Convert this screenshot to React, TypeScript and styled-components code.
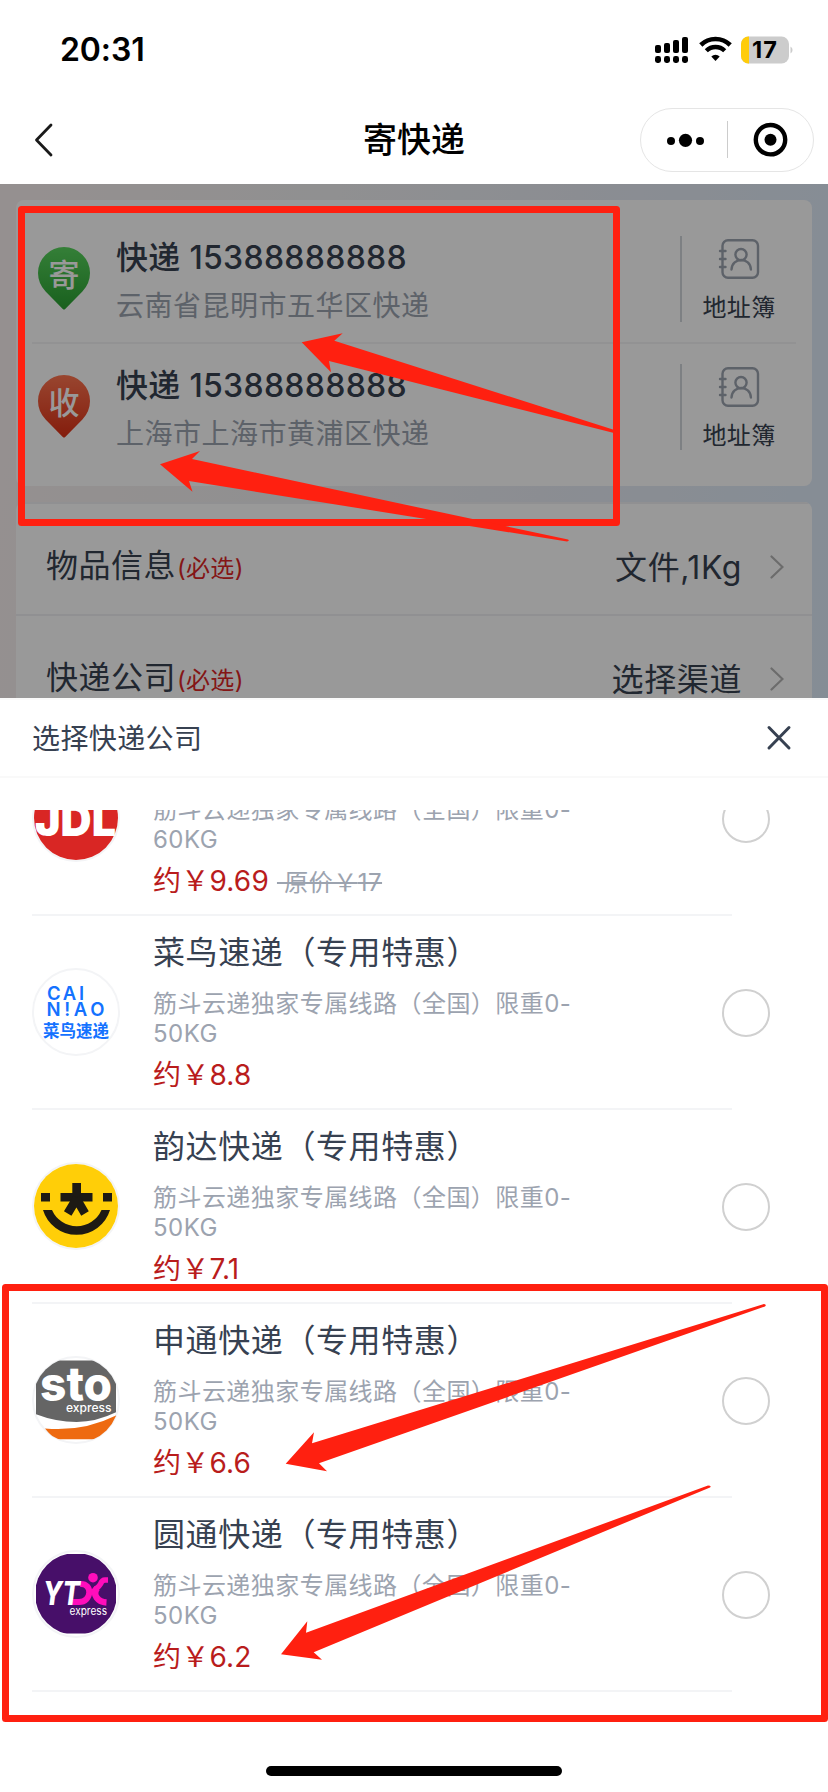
import React from "react";
import styled, { createGlobalStyle } from "styled-components";

const GlobalStyle = createGlobalStyle`
  * { box-sizing: border-box; }
  body {
    margin: 0;
    background: #fff;
    font-family: Inter, "Noto Sans CJK SC", sans-serif;
    color: #374151;
  }
  svg { display: block; flex: none; }
`;

const Screen = styled.div`
  position: relative;
  width: 828px;
  height: 1792px;
  overflow: hidden;
  display: flex;
  flex-direction: column;
  background: #fff;
`;

const StatusBar = styled.header`
  height: 100px;
  padding: 0 34px 0 60px;
  display: flex;
  align-items: center;
  justify-content: space-between;
  color: #000;
`;

const Clock = styled.time`
  font-size: 32px;
  font-weight: 600;
  line-height: 40px;
  letter-spacing: -0.1px;
`;

const StatusIcons = styled.div`
  display: flex;
  align-items: center;
`;

const NavBar = styled.nav`
  height: 84px;
  padding: 0 14px 4px 34px;
  display: grid;
  grid-template-columns: 1fr auto 1fr;
  align-items: center;
  color: #000;
`;

const NavTitle = styled.h1`
  margin: 0 10px 0 -10px;
  font-size: 34px;
  font-weight: 500;
  line-height: 48px;
`;

const Capsule = styled.div`
  justify-self: end;
  width: 174px;
  height: 64px;
  border: 1px solid #e5e5e5;
  border-radius: 32px;
  display: flex;
  align-items: center;
`;

const FormArea = styled.main`
  position: relative;
  height: 514px;
  flex: none;
  overflow: hidden;
  padding: 16px;
  display: flex;
  flex-direction: column;
  gap: 16px;
  background: linear-gradient(97deg, #f9f0f0 0%, #f0f0f2 38%, #e8ecf4 65%, #deebf9 100%);
`;

const Mask = styled.div`
  position: absolute;
  inset: 0;
  background: rgba(0, 0, 0, 0.4);
`;

const AddressCard = styled.section`
  flex: none;
  height: 286px;
  padding: 16px 16px 14px;
  border-radius: 8px;
  background: #fff;
`;

const AddressRow = styled.div<{ $last?: boolean }>`
  height: 128px;
  display: flex;
  align-items: center;
  border-bottom: 2px solid ${(p) => (p.$last ? "transparent" : "#f3f4f6")};
`;

const AddressText = styled.div`
  flex: 1;
  margin-left: 26px;
  padding-top: 5px;
`;

const Contact = styled.div`
  font-size: 32px;
  font-weight: 500;
  line-height: 48px;
  letter-spacing: 0.3px;
`;

const Place = styled.div`
  font-size: 28px;
  line-height: 48px;
  letter-spacing: 0.5px;
  color: #9ca3af;
`;

const BookButton = styled.div`
  width: 116px;
  height: 86px;
  border-left: 2px solid #d1d5db;
  display: flex;
  flex-direction: column;
  align-items: center;
  font-size: 24px;
  line-height: 36px;
  letter-spacing: 0.3px;

  svg { margin: 3px 0 11px; }
`;

const OptionCard = styled.section`
  flex: none;
  border-radius: 8px 8px 0 0;
  background: #fff;
  overflow: hidden;
`;

const OptionRow = styled.div`
  height: 112px;
  padding: 16px 28px 0 30px;
  border-top: 2px solid #f0f1f3;
  display: flex;
  align-items: center;
  font-size: 32px;
  line-height: 48px;
`;

const OptionName = styled.span`
  flex: 1;
  padding-top: 1px;
  letter-spacing: 0.5px;
`;

const Required = styled.small`
  margin-left: 1px;
  font-size: 24px;
  letter-spacing: 0.3px;
  color: #dc2626;
`;

const OptionValue = styled.span`
  padding-top: 1px;
  letter-spacing: 0.6px;
  margin-right: 28px;
`;

const Sheet = styled.section`
  flex: 1;
  display: flex;
  flex-direction: column;
`;

const SheetHeader = styled.div`
  height: 80px;
  padding: 0 36px 0 32px;
  display: flex;
  align-items: center;
  justify-content: space-between;
  border-top: 2px solid #fafafa;
  border-bottom: 2px solid #f9f9f9;
`;

const SheetTitle = styled.h2`
  margin: 0;
  padding-bottom: 2px;
  font-size: 28px;
  font-weight: 400;
  letter-spacing: 0.4px;
`;

const CarrierList = styled.div`
  margin: 32px 32px 0;
  height: 900px;
  overflow: hidden;
`;

const Scrolled = styled.div`
  margin-top: -88px;
`;

const Carrier = styled.article`
  width: 738px;
  height: 192px;
  display: flex;
  align-items: center;
`;

const Divider = styled.div`
  width: 700px;
  height: 2px;
  background: #f3f4f6;
`;

const Logo = styled.div`
  width: 88px;
  height: 88px;
  border: 2px solid #f3f4f6;
  border-radius: 50%;

  svg { margin: -2px; }
`;

const Details = styled.div`
  align-self: flex-start;
  width: 440px;
  margin-left: 33px;
  padding-top: 16px;
`;

const CarrierName = styled.div`
  font-size: 32px;
  line-height: 42px;
  letter-spacing: 0.6px;
  white-space: nowrap;
`;

const Desc = styled.div`
  margin-top: 15px;
  font-size: 24px;
  line-height: 30px;
  letter-spacing: 0.45px;
  color: #9ca3af;
`;

const Price = styled.div`
  margin-top: 8px;
  font-size: 28px;
  line-height: 36px;
  letter-spacing: 0.2px;
  color: #b91c1c;
  white-space: pre;
`;

const OldPrice = styled.s`
  margin-left: 8px;
  font-size: 24px;
  letter-spacing: 0.5px;
  color: #9ca3af;
`;

const Radio = styled.div`
  width: 48px;
  height: 48px;
  margin: 2px 0 0 auto;
  border: 2px solid #d0d0d0;
  border-radius: 50%;
`;

const HomeIndicator = styled.div`
  width: 296px;
  height: 10px;
  margin: auto auto 16px;
  border-radius: 5px;
  background: #000;
`;

const Annotations = styled.svg`
  position: absolute;
  inset: 0;
`;

const PhoneStatus = () => (
  <svg width="140" height="28" viewBox="0 0 140 28">
    {[
      [0, 9, 8],
      [9, 7, 10],
      [18, 4, 13],
      [27, 1, 16],
    ].map(([x, y, h]) => (
      <g key={x}>
        <rect x={x + 1} y={y} width="6" height={h} rx="2" />
        <rect x={x + 1} y="20" width="6" height="7" rx="2.4" />
      </g>
    ))}
    <g fill="none" stroke="#000">
      <path d="M46.8 9A21 21 0 0 1 76.200 9" strokeWidth="4.600" />
      <path d="M52.3 14.800A13 13 0 0 1 70.700 14.800" strokeWidth="4.400" />
    </g>
    <path d="M61.500 25L57.300 20.500A6 6 0 0 1 65.700 20.500Z" />
    <rect x="87" y="0.500" width="48" height="27" rx="7.500" fill="#ccc" />
    <path d="M95 0.500H94.500A7.500 7.500 0 0 0 87 8V20A7.500 7.500 0 0 0 94.500 27.500H95Z" fill="#ffcc0a" />
    <path d="M136.500 10.500A4 4 0 0 1 136.500 17.500Z" fill="#ccc" />
    <text x="98" y="22" fontSize="23.500" fontWeight="700" textLength="25">17</text>
  </svg>
);

const BackIcon = () => (
  <svg width="20" height="36" viewBox="0 0 20 36" fill="none" stroke="#1a1a1a" strokeWidth="2.800" strokeLinecap="round" strokeLinejoin="round">
    <path d="M17 3L2.500 18L17 33" />
  </svg>
);

const CapsuleIcons = () => (
  <svg width="172" height="62" viewBox="641 109 172 62">
    <circle cx="671" cy="141" r="4" />
    <circle cx="685.5" cy="140.300" r="6.600" />
    <circle cx="700" cy="141" r="4" />
    <path d="M727.500 121V158" stroke="#ccc" />
    <circle cx="770.500" cy="139.700" r="14.700" fill="none" stroke="#000" strokeWidth="4.400" />
    <circle cx="770.500" cy="139.700" r="6" />
  </svg>
);

const Pin = ({ label, colors }: { label: string; colors: [string, string] }) => (
  <svg width="52" height="64" viewBox="0 0 52 64" style={{ marginLeft: 6 }}>
    <defs>
      <linearGradient id={colors[0].slice(1)} x1="0" y1="0" x2="0" y2="1">
        <stop stopColor={colors[0]} />
        <stop offset="1" stopColor={colors[1]} />
      </linearGradient>
    </defs>
    <path
      d="M44.400 44.400L27.200 62Q26 63.200 24.800 62L7.600 44.400A26 26 0 1 1 44.400 44.400Z"
      fill={`url(#${colors[0].slice(1)})`}
    />
    <text x="26" y="39" fontSize="31" textAnchor="middle" fill="#fff" fontWeight="500">{label}</text>
  </svg>
);

const BookIcon = () => (
  <svg width="42" height="40" viewBox="0 0 42 40" fill="none" stroke="#9ca3af" strokeWidth="2.400" strokeLinecap="round">
    <rect x="4.500" y="1.200" width="35.500" height="37.500" rx="5.500" />
    <path d="M2 12H7.500M2 20H7.500M2 28H7.500" />
    <circle cx="23" cy="15.600" r="5.600" />
    <path d="M13.500 30.500C14 17.800 32.500 17.800 32.900 30.500" />
  </svg>
);

const Chevron = () => (
  <svg width="14" height="24" viewBox="0 0 14 24" fill="none" stroke="#b4b4b4" strokeWidth="2.200" strokeLinecap="round">
    <path d="M1.500 1.500L12.500 12L1.500 22.500" />
  </svg>
);

const CloseIcon = () => (
  <svg width="26" height="26" viewBox="0 0 26 26" fill="none" stroke="#374151" strokeWidth="3" strokeLinecap="round">
    <path d="M3 2.500L23 23M23 2.500L3 23" />
  </svg>
);

const JdLogo = () => (
  <svg width="88" height="88" viewBox="0 0 88 88">
    <circle cx="44" cy="44" r="42" fill="#d92624" />
    <text x="3" y="61.500" fontSize="46" fontWeight="900" fill="#fff" textLength="81" lengthAdjust="spacingAndGlyphs">JDL</text>
  </svg>
);

const CainiaoLogo = () => (
  <svg width="88" height="88" viewBox="0 0 88 88" fill="#1472ff">
    <text x="15" y="31.500" fontSize="18.500" fontWeight="600" textLength="37">CAI</text>
    <text x="14.500" y="48" fontSize="18.500" fontWeight="600" textLength="58">N!AO</text>
    <text x="11" y="68.500" fontSize="16.500" fontWeight="700">菜鸟速递</text>
  </svg>
);

const YundaLogo = () => (
  <svg width="88" height="88" viewBox="0 0 88 88">
    <circle cx="44" cy="44" r="42" fill="#ffce08" />
    <g fill="#1d1a14">
      <rect x="9" y="31" width="9" height="8.500" />
      <rect x="71" y="31" width="9" height="8.500" />
      <rect x="40.300" y="21" width="8.700" height="14" />
      <rect x="28.500" y="31" width="32" height="8.500" />
      <path d="M11 48A35 35 0 0 0 78 48H69.500A27 27 0 0 1 20 48Z" />
    </g>
    <path d="M45 36L35.700 51.500M44 36L53 51.500" stroke="#1d1a14" strokeWidth="8.700" />
  </svg>
);

const StoLogo = () => (
  <svg width="88" height="88" viewBox="0 0 88 88">
    <clipPath id="stoClip"><circle cx="44" cy="44" r="43" /></clipPath>
    <g clipPath="url(#stoClip)">
      <path d="M4 4.500H84V56.300Q64 66 44.700 66Q24 66 4 58.300Z" fill="#656565" />
      <path d="M13 72.500Q51 76 84 59.500V83.300H22Z" fill="#ee6a10" />
    </g>
    <g fill="#fff">
      <text x="8" y="45" fontSize="48" fontWeight="800" textLength="72" lengthAdjust="spacingAndGlyphs">sto</text>
      <text x="34" y="55.700" fontSize="12" fontWeight="500" textLength="45.500" lengthAdjust="spacingAndGlyphs">express</text>
    </g>
  </svg>
);

const YtoLogo = () => (
  <svg width="88" height="88" viewBox="0 0 88 88">
    <clipPath id="ytoClip"><circle cx="44" cy="44" r="41" /></clipPath>
    <rect x="4" y="4" width="80" height="79.500" fill="#470f69" clipPath="url(#ytoClip)" />
    <g fill="none" stroke="#ff0dbb" strokeWidth="6">
      <path d="M48 34C61 33 60 52 47 52H40" />
      <path d="M76 30H73Q70 30 68.500 34C66 38.500 62 39 61 43" strokeWidth="5.500" />
      <path d="M65 38C60 45 66 52 74.500 52.500" strokeWidth="6.500" />
    </g>
    <circle cx="61" cy="27.700" r="4.800" fill="#ff0dbb" />
    <g fill="#fff">
      <text x="11" y="55" fontSize="32" fontWeight="800" fontStyle="italic" textLength="37" lengthAdjust="spacingAndGlyphs">YT</text>
      <text x="37.500" y="64.700" fontSize="11" textLength="37.500" lengthAdjust="spacingAndGlyphs">express</text>
    </g>
  </svg>
);

const addresses = [
  { label: "寄", colors: ["#58d45d", "#2aa032"] as [string, string], place: "云南省昆明市五华区快递" },
  { label: "收", colors: ["#ff7550", "#dc3015"] as [string, string], place: "上海市上海市黄浦区快递" },
];

const options = [
  { name: "物品信息", value: "文件,1Kg" },
  { name: "快递公司", value: "选择渠道" },
];

const carriers = [
  { name: "京东快递（专用特惠）", logo: <JdLogo />, limit: "60KG", price: "9.69", old: "17" },
  { name: "菜鸟速递（专用特惠）", logo: <CainiaoLogo />, limit: "50KG", price: "8.8" },
  { name: "韵达快递（专用特惠）", logo: <YundaLogo />, limit: "50KG", price: "7.1" },
  { name: "申通快递（专用特惠）", logo: <StoLogo />, limit: "50KG", price: "6.6" },
  { name: "圆通快递（专用特惠）", logo: <YtoLogo />, limit: "50KG", price: "6.2" },
];

export default function App() {
  return (
    <>
      <GlobalStyle />
      <Screen>
        <StatusBar>
          <Clock>20:31</Clock>
          <StatusIcons><PhoneStatus /></StatusIcons>
        </StatusBar>
        <NavBar>
          <BackIcon />
          <NavTitle>寄快递</NavTitle>
          <Capsule><CapsuleIcons /></Capsule>
        </NavBar>

        <FormArea>
          <AddressCard>
            {addresses.map((a, i) => (
              <AddressRow key={a.label} $last={i === 1}>
                <Pin label={a.label} colors={a.colors} />
                <AddressText>
                  <Contact>快递 15388888888</Contact>
                  <Place>{a.place}</Place>
                </AddressText>
                <BookButton>
                  <BookIcon />
                  地址簿
                </BookButton>
              </AddressRow>
            ))}
          </AddressCard>
          <OptionCard>
            {options.map((o) => (
              <OptionRow key={o.name}>
                <OptionName>{o.name}<Required>(必选)</Required></OptionName>
                <OptionValue>{o.value}</OptionValue>
                <Chevron />
              </OptionRow>
            ))}
          </OptionCard>
          <Mask />
        </FormArea>

        <Sheet>
          <SheetHeader>
            <SheetTitle>选择快递公司</SheetTitle>
            <CloseIcon />
          </SheetHeader>
          <CarrierList>
            <Scrolled>
              {carriers.map((c) => (
                <React.Fragment key={c.name}>
                  <Carrier>
                    <Logo>{c.logo}</Logo>
                    <Details>
                      <CarrierName>{c.name}</CarrierName>
                      <Desc>筋斗云递独家专属线路（全国）限重0-<br />{c.limit}</Desc>
                      <Price>约￥{c.price}{c.old && <OldPrice> 原价￥{c.old}</OldPrice>}</Price>
                    </Details>
                    <Radio />
                  </Carrier>
                  <Divider />
                </React.Fragment>
              ))}
            </Scrolled>
          </CarrierList>
          <HomeIndicator />
        </Sheet>

        <Annotations width="828" height="1792" viewBox="0 0 828 1792" fill="#ff2010">
          <g fill="none" stroke="#ff2010" strokeWidth="7" strokeLinejoin="round">
            <rect x="21.500" y="209.500" width="595" height="313" />
            <rect x="5.500" y="1287.500" width="819" height="431" />
          </g>
          <path d="M301.700 342.300L342.700 333.300L334.300 340.700L616 430.500V433.500L329 361L331 372.300Z" />
          <path d="M160 464.300L200 451L192 459L568 539.500Q570 541 567 541.500L189 481L192.500 491.700Z" />
          <path d="M285.700 1463.700L314 1432.300L312 1443.300L764 1304Q767 1304.500 765 1306.500L319 1463.300L327 1471.300Z" />
          <path d="M281 1654.300L307.300 1621.300L306 1632.700L708 1485.500Q712 1485.500 710 1487.500L313.700 1652.300L322 1659.700Z" />
        </Annotations>
      </Screen>
    </>
  );
}
